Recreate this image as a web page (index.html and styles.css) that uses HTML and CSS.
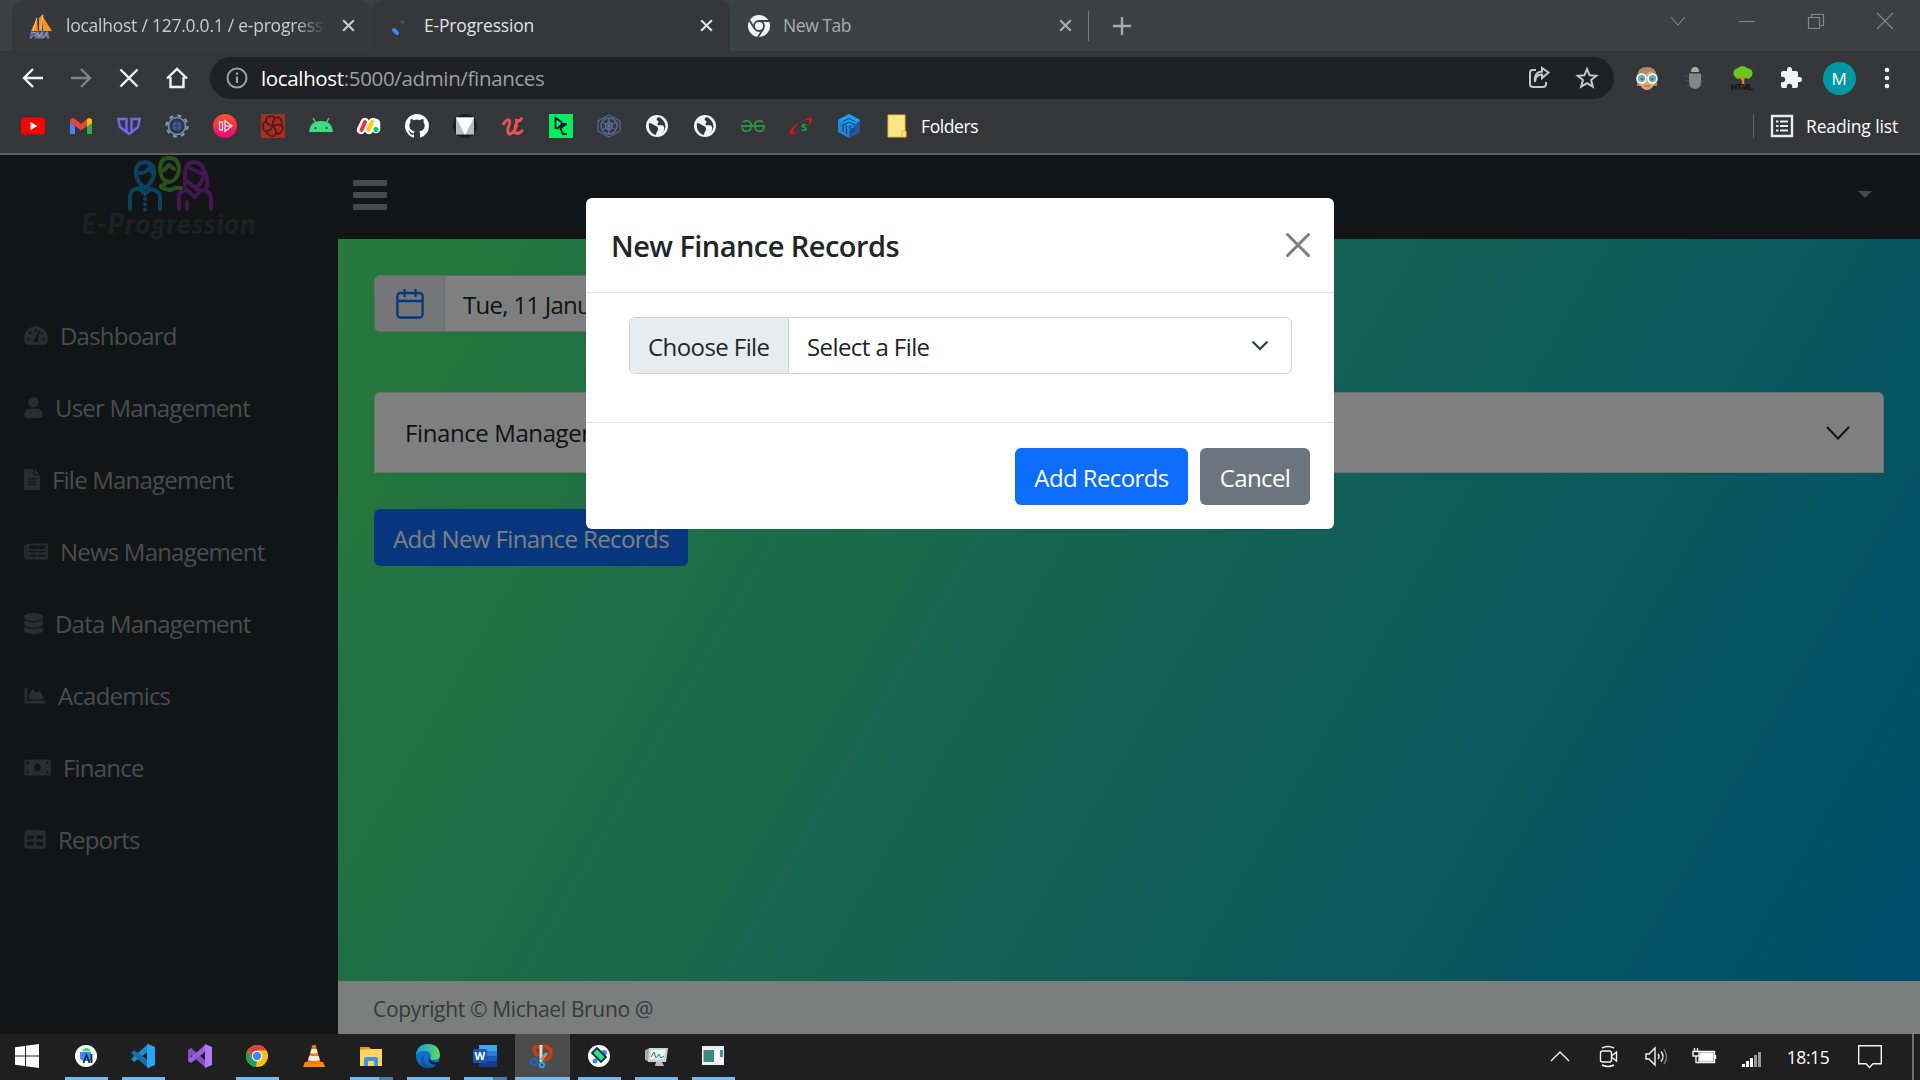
FILE: index.html
```html
<!DOCTYPE html>
<html lang="en">
<head>
<meta charset="utf-8">
<title>E-Progression</title>
<link rel="stylesheet" href="styles.css">
</head>
<body>
<svg width="0" height="0" class="defs" aria-hidden="true">
  <symbol id="x" viewBox="0 0 14 14"><path d="M2 2l10 10M12 2L2 12" stroke="currentColor" stroke-width="2" fill="none"/></symbol>
  <symbol id="globe" viewBox="0 0 24 24"><circle cx="12" cy="12" r="11" fill="#f1f3f4"/><path d="M4 9c4 0 5 3 7 3s2 3 2 4-2 2-2 5C6 20 3 15 4 9zM14 3c-3 1-3 3-1 4s-2 3 0 4 5-1 6 2-1 5-2 6c5-3 5-12-3-16z" fill="#35363a"/></symbol>
</svg>

<div class="tabs">
  <div class="tab first">
    <svg class="fav" viewBox="0 0 24 24"><path d="M1 17L7 4l1 13zM9 17V4l4-4-1 17zM13 17V3l9 14z" fill="#f69321"/><path d="M3 16L7 4M11 15l2-14" stroke="#fbc98b"/><text x="0" y="24" class="pma">PMA</text></svg>
    <span class="tab-title fade">localhost / 127.0.0.1 / e-progressi</span>
    <svg class="tx"><use href="#x"/></svg>
  </div>
  <div class="tab active">
    <svg class="fav" viewBox="0 0 24 24"><path d="M6 16l3 3" stroke="#4285f4" stroke-width="4" stroke-linecap="round"/><path d="M13 9l3-2" stroke="#375a58" stroke-width="3"/></svg>
    <span class="tab-title">E-Progression</span>
    <svg class="tx"><use href="#x"/></svg>
  </div>
  <div class="tab idle">
    <svg class="fav" viewBox="0 0 24 24"><circle cx="12" cy="12" r="11" fill="#f1f3f4"/><circle cx="12" cy="12" r="5" fill="none" stroke="#3c4043" stroke-width="1.8"/><path d="M12 7h11M7.500 14.500L2.200 6M16.500 14.500L11 23" stroke="#3c4043" stroke-width="1.800"/></svg>
    <span class="tab-title">New Tab</span>
    <svg class="tx"><use href="#x"/></svg>
  </div>
  <svg class="plus" viewBox="0 0 18 18"><path d="M9 0v18M0 9h18" stroke="#a9acaf" stroke-width="2.400"/></svg>
  <div class="wincontrols">
    <svg viewBox="0 0 18 18"><path d="M2 5l7 8 7-8"/></svg>
    <svg viewBox="0 0 18 18"><path d="M1 9.500h16"/></svg>
    <svg viewBox="0 0 18 18"><path d="M1.500 5.500h11v11h-11zM4.500 5V2.500h12v11H13"/></svg>
    <svg viewBox="0 0 18 18"><path d="M1 1l16 16M17 1L1 17"/></svg>
  </div>
</div>

<div class="toolbar">
  <span class="cell"><svg viewBox="0 0 24 24" class="ln"><path d="M22 12H3M12 3l-9 9 9 9"/></svg></span>
  <span class="cell"><svg viewBox="0 0 24 24" class="ln off"><path d="M2 12h19M12 3l9 9-9 9"/></svg></span>
  <span class="cell"><svg viewBox="0 0 24 24" class="ln"><path d="M3.500 3.500l17 17M20.500 3.500l-17 17"/></svg></span>
  <span class="cell"><svg viewBox="0 0 24 24" class="ln"><path d="M5.500 11v10h13V11M2 12.500L12 3l10 9.500"/></svg></span>
  <div class="omni">
    <svg class="info" viewBox="0 0 24 24"><circle cx="12" cy="12" r="9.500" fill="none" stroke="#9aa0a6" stroke-width="2"/><path d="M12 10.500v6.500M12 6.500v2.300" stroke="#9aa0a6" stroke-width="2.200"/></svg>
    <span class="url"><b>localhost</b>:5000/admin/finances</span>
    <span class="cell end"><svg viewBox="0 0 24 24" class="ln sm"><path d="M9 4H5.500Q3 4 3 7v11q0 3 3 3h10q3 0 3-3v-2M8 16c0-5 3-7.500 7-7.500V12l6.500-5.500L15 2v3.500C9 6 7 10 8 16z"/></svg></span>
    <span class="cell"><svg viewBox="0 0 24 24" class="ln sm"><path d="M12 3l2.600 6.300 6.700.5-5.200 4.300 1.700 6.600L12 17.100l-5.800 3.600 1.700-6.600-5.200-4.300 6.700-.5z"/></svg></span>
  </div>
  <span class="cell ext"><svg viewBox="0 0 24 24"><path d="M2 10Q3 1 12 1t10 9v10H2z" fill="#a98d67"/><path d="M4 9l7-1 5-3 4 4v8q-3 7-8 7t-8-7z" fill="#e5a27c"/><circle cx="6.500" cy="12.500" r="4.500" fill="#6fb2bd" stroke="#fff" stroke-width="1.600"/><circle cx="17.500" cy="12.500" r="4.500" fill="#6fb2bd" stroke="#fff" stroke-width="1.600"/><circle cx="7" cy="13" r="1.500" fill="#3b7686"/><circle cx="17" cy="13" r="1.500" fill="#3b7686"/><path d="M9 20h6" stroke="#b0523c"/></svg></span>
  <span class="cell"><svg viewBox="0 0 24 24"><path d="M2 9l5 3M22 9l-5 3M2 15h4m12 0h4M3 21l4-3m14 3l-4-3" stroke="#4d4e50"/><path d="M8 6q0-5 4-5t4 5z" fill="#aaa"/><path d="M6 7.500h12V15q0 8-6 8t-6-8z" fill="#858585"/></svg></span>
  <span class="cell"><svg viewBox="0 0 24 24"><path d="M12 8v13M12 13l4-4M12 14l-4-4" stroke="#d9822b" stroke-width="2.400"/><path d="M2.500 7q0-4 4.500-5 4-4 9 0 5.500 1 5.500 5t-4.500 6l-5-3-5 3q-4.500-2-4.500-6z" fill="#6cc71c"/><text x="0" y="24" class="htmlmark">HTML</text></svg></span>
  <span class="cell"><svg viewBox="0 0 24 24"><path d="M20.500 11H19V7a2 2 0 0 0-2-2h-4V3.500a2.500 2.500 0 0 0-5 0V5H4a2 2 0 0 0-2 2v3.800h1.500a2.700 2.700 0 0 1 0 5.400H2V20a2 2 0 0 0 2 2h3.800v-1.500a2.700 2.700 0 0 1 5.400 0V22H17a2 2 0 0 0 2-2v-4h1.500a2.500 2.500 0 0 0 0-5z" fill="#f1f3f4"/></svg></span>
  <span class="cell"><span class="avatar">M</span></span>
  <span class="cell"><svg viewBox="0 0 24 24" fill="#f1f3f4"><circle cx="12" cy="4" r="2.300"/><circle cx="12" cy="12" r="2.300"/><circle cx="12" cy="20" r="2.300"/></svg></span>
</div>

<div class="bookmarks">
  <span class="cell"><svg viewBox="0 0 24 24"><rect y="3.500" width="24" height="17" rx="3.500" fill="#f00"/><path d="M9.500 8l7 4-7 4z" fill="#fff"/></svg></span>
  <span class="cell"><svg viewBox="0 0 24 24"><path d="M1 6v14h5V10z" fill="#4285f4"/><path d="M23 6v14h-5V10z" fill="#34a853"/><path d="M1 5l5 1v6l-5-4z" fill="#c5221f"/><path d="M23 5l-5 1v6l5-4z" fill="#fbbc04"/><path d="M1.500 6Q3 2.500 6 5l6 5 6-5v7l-6 4.500L1.500 8z" fill="#ea4335"/><path d="M18 5q3-2.500 5 1v3l-5 3.500z" fill="#fbbc04"/></svg></span>
  <span class="cell"><svg viewBox="0 0 24 24" fill="none" stroke="#7864ee" stroke-width="2.400"><path d="M10.500 19L3 13 1.300 5h8.200v13M13.500 19l7.500-6 1.700-8h-8.200v13M9.500 18l2.500 2 2.500-2"/></svg></span>
  <span class="cell"><svg viewBox="0 0 24 24" fill="none" stroke="#6c8fbe"><circle cx="12" cy="12" r="8.500" stroke-width="1.600"/><circle cx="12" cy="12" r="10.500" stroke-width="2.200" stroke="#8099b9" stroke-dasharray="4 4.250"/><circle cx="12" cy="12" r="4.500" fill="#315fa5" stroke="none"/><path d="M8 12h8m-4-4v8" stroke="#263f67"/></svg></span>
  <span class="cell"><svg viewBox="0 0 24 24"><defs><linearGradient id="pg" x2="0" y2="1"><stop stop-color="#f15a22"/><stop offset="1" stop-color="#f5007e"/></linearGradient></defs><circle cx="12" cy="12" r="12" fill="url(#pg)"/><path d="M6.500 8v8h3V8zM12 6.500v11l7-5.500zM12 12h6" stroke="#ffdce8" stroke-width="1.300" fill="none"/></svg></span>
  <span class="cell"><svg viewBox="0 0 24 24"><path fill="#a52d25" d="M0 0h24v24H0z"/><g fill="none" stroke="#4a1a18" stroke-width="1.600"><path id="sw" d="M12 12q-1-8 5-9 6 4 3 9"/><use href="#sw" transform="rotate(72 12 12)"/><use href="#sw" transform="rotate(144 12 12)"/><use href="#sw" transform="rotate(216 12 12)"/><use href="#sw" transform="rotate(288 12 12)"/></g></svg></span>
  <span class="cell"><svg viewBox="0 0 24 24"><path d="M0 18Q1 7 12 7t12 11z" fill="#3ddc84"/><path d="M4 4l3 5M20 4l-3 5" stroke="#3ddc84" stroke-width="1.400"/><circle cx="6.500" cy="14" r="1.100" fill="#35363a"/><circle cx="17.500" cy="14" r="1.100" fill="#35363a"/></svg></span>
  <span class="cell"><svg viewBox="0 0 24 24"><path d="M4 16L8 8m4 8l4-8m3 7V9" stroke="#fff" stroke-width="8.500" stroke-linecap="round"/><path d="M4.500 16L8 8" stroke="#f62b54" stroke-width="4" stroke-linecap="round"/><path d="M11.500 16L15 8" stroke="#fc0" stroke-width="4" stroke-linecap="round"/><circle cx="19" cy="15.500" r="2.600" fill="#00ca72"/></svg></span>
  <span class="cell"><svg viewBox="0 0 16 16"><path fill="#fff" d="M8 0C3.580 0 0 3.580 0 8c0 3.540 2.290 6.530 5.470 7.590.4.070.55-.17.55-.38 0-.19-.01-.82-.01-1.490-2.010.37-2.530-.49-2.690-.94-.09-.23-.48-.94-.82-1.130-.28-.15-.68-.52-.01-.53.63-.01 1.080.58 1.230.82.720 1.210 1.870.87 2.330.66.070-.52.280-.87.510-1.070-1.780-.2-3.640-.89-3.640-3.950 0-.87.310-1.590.82-2.150-.08-.2-.36-1.020.08-2.120 0 0 .67-.21 2.200.82.640-.18 1.320-.27 2-.27s1.360.09 2 .27c1.530-1.040 2.200-.82 2.200-.82.440 1.100.160 1.920.080 2.120.510.560.82 1.270.82 2.150 0 3.070-1.870 3.750-3.650 3.950.290.250.540.730.540 1.480 0 1.070-.01 1.930-.01 2.200 0 .210.150.460.550.380A8 8 0 0 0 16 8c0-4.420-3.580-8-8-8z"/></svg></span>
  <span class="cell"><svg viewBox="0 0 24 24"><circle cx="12" cy="12" r="12" fill="#1d1d1f"/><path d="M3 3.500h18v17H3z" fill="#bbb"/><path d="M3 3.500h18L12 21z" fill="#fff"/></svg></span>
  <span class="cell"><svg viewBox="0 0 24 24" fill="none" stroke="#eb5252" stroke-width="3"><path d="M2 11q4-6 6-5t-1 8q-1 6 2 6 4-1 7-9M17 6q-4 8-3 12 2 4 8-2M14 6.500h5l2-3"/></svg></span>
  <span class="cell"><svg viewBox="0 0 24 24"><path fill="#03ef62" d="M0 0h24v24H0z"/><path d="M6.500 15V4l6 4v3l-5 4M18 10h-4l-2.500 5 2.500 5h4M11 15l6-5" fill="none" stroke="#05192d" stroke-width="1.800"/></svg></span>
  <span class="cell"><svg viewBox="0 0 24 24" fill="none" stroke="#5b6b96" stroke-width="1.400"><path d="M12 1l11 6v10l-11 6-11-6V7z" stroke="#48649f"/><circle cx="12" cy="12" r="8"/><circle cx="12" cy="12" r="3.500"/><path d="M12 4v16M5 8l14 8M5 16l14-8"/></svg></span>
  <span class="cell"><svg viewBox="0 0 24 24"><use href="#globe"/></svg></span>
  <span class="cell"><svg viewBox="0 0 24 24"><use href="#globe"/></svg></span>
  <span class="cell"><svg viewBox="0 0 24 24" fill="none" stroke="#2f8d46" stroke-width="2"><path d="M2 8q4-2.500 7 0 2.500 4 0 8-4 2.500-7 0-1-2-1-4h22q0 2-1 4-3 2.500-7 0-2.500-4 0-8 3-2.500 7 0"/></svg></span>
  <span class="cell"><svg viewBox="0 0 24 24"><path d="M13 7q10-6 10-2 0 3-4 7 2-5 1-6-4-1-11 4-5 5-5 8 1 2 8-1Q1 23 0 19 1 13 13 7z" fill="#d8141c"/><text x="12" y="17" class="slogo">s</text></svg></span>
  <span class="cell"><svg viewBox="0 0 24 24"><path d="M12 0l11 6v12l-11 6-11-6V6z" fill="#1e88d8"/><path d="M12 0l11 6-11 6L1 6z" fill="#12a5f4"/><path d="M12 18l11-12v12l-11 6z" fill="#28529b"/><path d="M6 7.500l6-3 6 3M6 11l6-3 6 3M6 11v7M9.500 11.500V20M13 11v4h5M13 18l4-2" fill="none" stroke="#163d72" stroke-width="1.100"/></svg></span>
  <span class="cell"><svg viewBox="0 0 24 24"><path d="M3 1h17v16h1v6H3z" fill="#ffe48a" stroke="#e9bd35"/><path d="M17 22v-5h4" fill="none" stroke="#e9bd35"/></svg></span>
  <span class="bm-label">Folders</span>
  <span class="reading"><svg viewBox="0 0 24 24"><path d="M2 2h20v20H2z" fill="none" stroke="#e8eaed" stroke-width="2.400"/><path d="M6 7.500h2.500m1.500 0h8M6 12h2.500m1.500 0h8M6 16.500h2.500m1.500 0h8" stroke="#e8eaed" stroke-width="2"/></svg><span>Reading list</span></span>
</div>

<div class="page">
  <aside class="sidebar">
    <div class="logo">
      <svg viewBox="126 155 88 57" fill="none" stroke-width="4" stroke-linecap="round">
        <g stroke="#1685bb"><path d="M145 162q-10 1-9 12 1 8 9 14 8-6 9-14 1-11-9-12zM140 173q6 0 9-5l4 5M130 209v-13q0-6 9-8l6 6 5-5M151 189q9 2 9 8v12"/><path d="M145 199v11" stroke-dasharray="0 5.200"/></g>
        <g stroke="#52a336"><path d="M169 158q-9 0-9 11 1 8 4 11l5 2 5-2q4-3 5-11 0-11-10-11zM164 170l5-5 5 4M161 186q4-1 5-4M161 187q8 5 14 1l6 0M169 190h2"/></g>
        <g stroke="#842da3"><path d="M194 162q-9 0-9 13v11M194 162q10 1 10 11-1 10-9 15l-8-7M203 168q7 13 3 21M190 168l12 6M179 209v-12q0-6 8-7l8 7 6-7q10 1 10 8v11M187 202v7M195 188l5 3"/></g>
      </svg>
      <span class="brand">E-Progression</span>
    </div>
    <nav>
      <a><svg width="24" viewBox="0 0 576 512"><path fill-rule="evenodd" d="M288 32C129 32 0 161 0 320c0 53 14 102 39 145 6 9 16 15 27 15h444c11 0 21-6 27-15 25-43 39-92 39-145C576 161 447 32 288 32zM96 320a32 32 0 1 0 .1 64 32 32 0 0 0 0-64zM144 160a32 32 0 1 0 .1 64 32 32 0 0 0 0-64zM288 96a32 32 0 1 0 .1 64 32 32 0 0 0 0-64zM432 176a32 32 0 1 0 .1 64 32 32 0 0 0 0-64zM480 320a32 32 0 1 0 .1 64 32 32 0 0 0 0-64zM350 150l36 10-55 175q29 29 13 81H232q-20-60 48-92z"/></svg>Dashboard</a>
      <a><svg width="19" viewBox="0 0 448 512"><path d="M224 256a128 128 0 1 0 0-256 128 128 0 0 0 0 256zm90 32H134C60 288 0 348 0 422v42c0 26 22 48 48 48h352c26 0 48-22 48-48v-42c0-74-60-134-134-134z"/></svg>User Management</a>
      <a><svg width="16" viewBox="0 0 384 512"><path fill-rule="evenodd" d="M224 136V0H24Q0 0 0 24v464q0 24 24 24h336q24 0 24-24V160H248q-24 0-24-24zM96 224h192v32H96zm0 64h192v32H96zm0 64h192v32H96zM256 0v128h128z"/></svg>File Management</a>
      <a><svg width="24" viewBox="0 0 576 512"><path fill-rule="evenodd" d="M552 64H88Q64 64 64 88v8H24Q0 96 0 120v272q0 56 56 56h496q24 0 24-24V88q0-24-24-24zM48 144h16v256H48zM120 112h400v80H120zm0 128h184v40H120zm216 0h184v40H336zM120 336h184v40H120zm216 0h184v40H336z"/></svg>News Management</a>
      <a><svg width="19" viewBox="0 0 448 512"><path d="M448 73v46c0 40-100 73-224 73S0 159 0 119V73C0 33 100 0 224 0s224 33 224 73zm0 103v103c0 40-100 73-224 73S0 319 0 279V176c48 33 136 48 224 48s176-15 224-48zm0 160v103c0 40-100 73-224 73S0 479 0 439V336c48 33 136 48 224 48s176-15 224-48z"/></svg>Data Management</a>
      <a><svg width="22" viewBox="0 0 512 512"><path d="M500 384q12 0 12 12v52H12q-12 0-12-12V64h64v320zM96 352V248l94-144q10-10 20 0l72 82 80-40q12-6 18 6l100 200z"/></svg>Academics</a>
      <a><svg width="27" viewBox="0 0 640 512"><path fill-rule="evenodd" d="M608 64H32Q0 64 0 96v320q0 32 32 32h576q32 0 32-32V96q0-32-32-32zM48 400v-64q64 0 64 64zm0-224v-64h64q0 64-64 64zm272 176c-44 0-80-43-80-96s36-96 80-96 80 43 80 96-36 96-80 96zm272 48h-64q0-64 64-64zm0-224q-64 0-64-64h64z"/></svg>Finance</a>
      <a><svg width="22" viewBox="0 0 512 512"><path fill-rule="evenodd" d="M464 32H48Q0 32 0 80v352q0 48 48 48h416q48 0 48-48V80q0-48-48-48zM64 160h160v88H64zm0 152h160v96H64zm224-152h160v88H288zm0 152h160v96H288z"/></svg>Reports</a>
    </nav>
  </aside>
  <main class="main">
    <header class="navbar">
      <div class="burger"><i></i><i></i><i></i></div>
      <div class="caret"></div>
    </header>
    <section class="content">
      <div class="date">
        <span class="cal"><svg viewBox="0 0 28 30" fill="none" stroke="#0d6efd" stroke-width="2.300"><rect x="1.400" y="4" width="25.200" height="24.500" rx="3"/><path d="M1 12h26M8.500 0v8M19.500 0v8"/></svg></span>
        <span class="date-text">Tue, 11 January 2022</span>
      </div>
      <div class="accordion"><span>Finance Management</span><svg viewBox="0 0 24 14" fill="none" stroke="#212529" stroke-width="2"><path d="M1 1l11 11.500L23 1"/></svg></div>
      <button class="btn primary">Add New Finance Records</button>
    </section>
    <footer class="foot">Copyright © Michael Bruno @</footer>
  </main>
  <div class="backdrop"></div>
  <div class="modal">
    <div class="modal-head"><h5>New Finance Records</h5><svg viewBox="0 0 24 24"><path d="M1.500 1.500l21 21M22.500 1.500l-21 21" stroke="#7f7f7f" stroke-width="3" stroke-linecap="round"/></svg></div>
    <div class="modal-body"><div class="group"><span class="lbl">Choose File</span><span class="sel">Select a File<svg viewBox="0 0 16 10"><path d="M1.200 1.200L8 8l6.800-6.800" fill="none" stroke="#343a40" stroke-width="2.200" stroke-linecap="round"/></svg></span></div></div>
    <div class="modal-foot"><button class="btn primary add">Add Records</button><button class="btn secondary">Cancel</button></div>
  </div>
</div>

<div class="taskbar">
  <span class="task start"><svg viewBox="0 0 24 24" fill="#fff"><path d="M0 3.300L10 2v9.500H0zM11 1.800L24 0v11.500H11zM0 12.500h10V22L0 20.700zM11 12.500h13V24l-13-1.800z"/></svg></span>
  <span class="task on"><svg viewBox="0 0 24 24"><circle cx="12" cy="12" r="11" fill="#fff"/><path d="M8 7.500q1-3.500 4.500-3.500T17 7.500z" fill="#3ddc84"/><path d="M6 8h11v9H9l-3-2z" fill="#4285f4"/><path d="M9.500 19l3-8 3 8M17.500 10v9" fill="none" stroke="#073042" stroke-width="1.800"/></svg></span>
  <span class="task on"><svg viewBox="0 0 24 24"><path d="M17 0L0 15l3 3L18 7z" fill="#2489ca"/><path d="M17 24L0 9l3-3 15 11z" fill="#1070b3"/><path d="M17 0l7 3v18l-7 3-1-1V1z" fill="#27a5f1"/></svg></span>
  <span class="task"><svg viewBox="0 0 24 24"><path d="M0 6l3-2 15 13v7L3 11v7l-3-2z" fill="#854cc7"/><path d="M0 17l3 2L18 7V0L0 16z" fill="#9d5cdd"/><path d="M17 0l7 3v18l-7 3z" fill="#b179f1"/></svg></span>
  <span class="task on"><svg viewBox="0 0 24 24"><circle cx="12" cy="12" r="11" fill="#fbc116"/><path d="M2.500 6.500L7.200 15 12 12V6.500h9.500A11 11 0 0 0 2.500 6.500z" fill="#db4437"/><path d="M2.500 6.500L7 15l5 2.500L11 23A11 11 0 0 1 2.500 6.500z" fill="#1da05a"/><circle cx="12" cy="12" r="5.300" fill="#fff"/><circle cx="12" cy="12" r="4.200" fill="#4285f4"/></svg></span>
  <span class="task"><svg viewBox="0 0 24 24"><path d="M3 18h18l2 5H1z" fill="#fa8b0c"/><path d="M10.500 1h3L19 19q-7 3-14 0z" fill="#f07c00"/><path d="M9.500 5h5l1.200 4q-3.700 1.500-7.400 0zM7.500 12h9l1.300 4q-6 2-11.600 0z" fill="#eee"/></svg></span>
  <span class="task on multi"><svg viewBox="0 0 24 24"><path d="M1 3h9l2 2v4H1z" fill="#e0a008"/><path d="M1 6l11-1h11v17H1z" fill="#ffd45e"/><path d="M5 22v-7q0-2 2-2h10q2 0 2 2v7h-4v-5H9v5z" fill="#3a96dd"/></svg></span>
  <span class="task on"><svg viewBox="0 0 24 24"><defs><linearGradient id="eg"><stop stop-color="#1696df"/><stop offset="1" stop-color="#65dd55"/></linearGradient></defs><circle cx="12" cy="12" r="12" fill="#0c72c9"/><path d="M0 11Q1 0 12 0t12 11q0 5-7 5-4-1-2-4-1-5-6-5-6 0-9 4z" fill="url(#eg)"/><path d="M13 13q0 6 10 5l1-4v6l-4 1q-9 0-7-8z" fill="#202020"/><path d="M8 11q-2 13 12 9-8 7-14 2-4-5 2-11z" fill="#1553a5"/></svg></span>
  <span class="task on multi"><svg viewBox="0 0 24 24"><path d="M6 1h18v6H6z" fill="#41a5ee"/><path d="M6 7h18v5H6z" fill="#2b7cd3"/><path d="M6 12h18v5H6z" fill="#185abd"/><path d="M6 17h18v6H6z" fill="#103f91"/><rect y="5" width="14" height="14" rx="1" fill="#1956b5"/><text x="1.500" y="16" class="wmark">W</text></svg></span>
  <span class="task on current"><svg viewBox="0 0 24 24"><path d="M3 3h8M4 4q1 6 4 8" fill="none" stroke="#cf3c0c" stroke-width="3.500"/><path d="M10 2.500q10-1 11 6 0 7-8 8" fill="none" stroke="#cf3c0c" stroke-width="3.500"/><path d="M11 1v17" stroke="#ddd" stroke-width="3"/><path d="M17 9l-6 7" stroke="#999" stroke-width="3"/><circle cx="4" cy="18" r="3" fill="none" stroke="#0c6cc0" stroke-width="2.200"/><circle cx="12" cy="21" r="2.300" fill="none" stroke="#29a0e8" stroke-width="2"/></svg></span>
  <span class="task on"><svg viewBox="0 0 24 24"><circle cx="12" cy="12" r="11" fill="#fff"/><circle cx="8" cy="17" r="2.500" fill="#4285f4"/><circle cx="17" cy="9" r="3" fill="#4285f4"/><path d="M10 4l9 9-5 5-9-9z" fill="#3ddc84" stroke="#073042" stroke-width="1.800"/></svg></span>
  <span class="task on"><svg viewBox="0 0 24 24"><path d="M1 6l5-2v14l-5-2z" fill="#aaa"/><path d="M5 4h19l-2 14H4z" fill="#d2d2d2"/><path d="M7 6h14l-1 9H6z" fill="#eef6fb"/><path d="M7 13l3-5 2 6 3-4 2 4 3-2" fill="none" stroke="#1978aa"/><path d="M12 18h6l2 4h-9z" fill="#bbb"/></svg></span>
  <span class="task on"><svg viewBox="0 0 24 24"><path d="M1 2h22v19H1z" fill="#eceff4"/><path d="M2.500 6H13v12H2.500z" fill="#3b8b78"/><path d="M14 6h4v12h-4zM19 14h3v4h-3z" fill="#fff"/><path d="M19 6h3v7h-3z" fill="#4b8e8b"/></svg></span>
  <div class="tray">
    <span class="cell"><svg viewBox="0 0 24 24"><path d="M3 16l9-9 9 9"/></svg></span>
    <span class="cell"><svg viewBox="0 0 24 24"><rect x="4.500" y="6" width="11" height="11" rx="2"/><path d="M15.500 11l5-4v9l-5-4M6 3q6-3 12 0M6 20q6 3 12 0"/></svg></span>
    <span class="cell"><svg viewBox="0 0 24 24"><path d="M2 9h3l6-6v17l-6-6H2zM14 9q2 2.500 0 5M17 6.500q4 5 0 10"/><path d="M20 4q5 8 0 15" stroke="#777"/></svg></span>
    <span class="cell"><svg viewBox="0 0 24 24"><path d="M7 6.500h15.500v11H6M23.500 10v4"/><path d="M9 8h12v8H7v-3z" fill="#fff"/><path d="M1 6.500h6V11H1zM2.500 3v3M5.500 3v3M4 11v6.500h3"/></svg></span>
    <span class="cell"><svg viewBox="0 0 24 24" class="sig"><path d="M2 19h3v3H2zM6 16h3v6H6zM10 13h3v9h-3z" fill="#fff"/><path d="M14 10h3v12h-3zM18 7h3v15h-3z" fill="#999"/></svg></span>
    <span class="clock">18:15</span>
    <span class="note"><svg viewBox="0 0 24 24"><path d="M.7.700h22.600v18H15L11.500 22.500 8 18.700H.7z"/></svg></span>
    <span class="peek"></span>
  </div>
</div>
</body>
</html>
```
FILE: styles.css
```css
* { box-sizing: border-box; }
body { margin: 0; width: 1920px; height: 1080px; overflow: hidden; display: flex; flex-direction: column; font-family: "Open Sans", "Noto Sans", sans-serif; background: #35363a; letter-spacing: -0.025em; white-space: nowrap; }
svg { display: block; flex: none; overflow: visible; }
.defs { position: absolute; }
.cell { width: 48px; height: 100%; display: flex; align-items: center; justify-content: center; flex: none; }
.cell svg { width: 24px; height: 24px; }

.tabs { height: 51px; background: #3c4043; display: flex; align-items: center; padding-left: 12px; flex: none; }
.tab { height: 51px; width: 359px; display: flex; align-items: center; padding-left: 18px; color: #dfe1e5; font-size: 17.5px; flex: none; }
.tab.first { background: #37383c; border-radius: 12px 12px 0 0; color: #c9cbce; }
.tab.active { background: #35363a; border-radius: 12px 12px 0 0; padding-left: 17px; }
.fav { width: 24px; height: 24px; }
.pma { font: bold italic 9px "Liberation Sans", sans-serif; fill: #2f2f6e; stroke: #d5d5ee; stroke-width: .4px; }
.tab-title { margin: 0 0 2px 12px; width: 260px; overflow: hidden; }
.first .tab-title { letter-spacing: -0.014em; }
.active .tab-title { width: 271px; letter-spacing: -0.01em; }
.active .tx { margin-left: 4px; }
.fade { -webkit-mask-image: linear-gradient(90deg, #000 88%, transparent); mask-image: linear-gradient(90deg, #000 88%, transparent); }
.tx { width: 15px; height: 15px; margin-left: 15px; }
.tab.idle { height: 30px; padding-left: 17px; color: #a9acaf; border-right: 1px solid #787b7f; }
.idle .tab-title { letter-spacing: -0.025em; }
.idle .tx { margin-left: 15px; }
.plus { width: 18px; height: 18px; margin-left: 24px; }
.wincontrols { margin-left: auto; display: flex; gap: 51px; padding: 0 26px 9px 0; }
.wincontrols svg { width: 18px; height: 18px; fill: none; stroke: #84878a; stroke-width: 1.1px; }

.toolbar { height: 54px; display: flex; align-items: center; padding-left: 9px; flex: none; }
.ln { fill: none; stroke: #f1f3f4; stroke-width: 2.4px; }
.ln.off { stroke: #7f8286; }
.ln.sm { stroke: #c4c7ca; stroke-width: 2px; }
.omni { margin-left: 9px; width: 1404px; height: 42px; border-radius: 21px; background: #202124; display: flex; align-items: center; padding: 0 3px 0 15px; }
.info { width: 24px; height: 24px; }
.url { margin-left: 12px; font-size: 20.5px; color: #9aa0a6; letter-spacing: -0.017em; }
.url b { font-weight: 400; color: #fff; }
.end { margin-left: auto; }
.ext { margin-left: 9px; }
.htmlmark { font: bold 8.5px "Liberation Sans", sans-serif; fill: #111; }
.avatar { width: 33px; height: 33px; border-radius: 50%; background: #0097a7; color: #fff; font-size: 17px; display: flex; align-items: center; justify-content: center; }

.bookmarks { height: 50px; display: flex; align-items: center; padding: 0 22px 6px 9px; border-bottom: 2px solid #5f6064; color: #fff; font-size: 17.5px; flex: none; }
.bm-label { margin-bottom: 1px; }
.slogo { font: bold 13px "Open Sans", sans-serif; fill: #14a24a; }
.reading { margin-left: auto; display: flex; align-items: center; border-left: 1px solid #66686c; height: 24px; padding-left: 16px; gap: 12px; letter-spacing: -0.008em; }
.reading svg { width: 24px; height: 24px; }

.page { height: 879px; display: flex; position: relative; flex: none; font-size: 24px; overflow: hidden; }
.sidebar { width: 338px; background: #24282c; flex: none; }
.logo { height: 144px; display: flex; flex-direction: column; align-items: center; }
.logo svg { width: 88px; height: 57px; margin-left: 2px; }
.brand { font: italic 900 28px/28px Lato, sans-serif; color: #3d3f4b; letter-spacing: 0.95px; margin-top: -3px; }
nav { display: flex; flex-direction: column; }
nav a { height: 72px; display: flex; align-items: center; gap: 12px; padding-left: 24px; color: #97989a; letter-spacing: -0.033em; }
nav svg { height: 21px; fill: #58595c; }
.main { flex: 1; display: flex; flex-direction: column; }
.navbar { height: 84px; background: #24282c; display: flex; align-items: center; justify-content: space-between; padding: 0 48px 6px 15px; }
.burger { display: flex; flex-direction: column; gap: 6px; padding-top: 1px; }
.burger i { width: 34px; height: 6px; background: #929395; border-radius: 1px; }
.caret { border: 7px solid transparent; border-top-color: #929395; border-bottom: 0; }
.content { height: 742px; padding: 36px; background: linear-gradient(120deg, #50f274, #0098d6); display: flex; flex-direction: column; align-items: flex-start; }
.date { height: 57px; width: 600px; display: flex; border: 1px solid #ced4da; border-radius: 6px; background: #fff; color: #212529; }
.cal { width: 70px; background: #e9ecef; border-right: 1px solid #ced4da; display: flex; align-items: center; justify-content: center; border-radius: 5px 0 0 5px; }
.cal svg { width: 28px; height: 30px; }
.date-text { padding: 11px 18px; line-height: 36px; letter-spacing: -0.03em; }
.accordion { margin-top: 60px; height: 81px; width: 1510px; border: 1px solid #dfdfdf; border-radius: 6px 6px 0 0; background: #fff; display: flex; align-items: center; justify-content: space-between; padding: 0 33px 0 30px; color: #212529; }
.accordion svg { width: 24px; height: 14px; }
.content .btn { margin-top: 36px; width: 314px; }
.btn { height: 57px; border: 0; border-radius: 6px; color: #fff; font: 24px/36px "Open Sans", sans-serif; letter-spacing: -0.025em; padding: 2px 0 0; }
.primary { background: #0d6efd; }
.secondary { background: #6c757d; width: 110px; }
.add { width: 173px; }
.foot { height: 53px; background: #f9fdfb; color: #6c7378; font-size: 21px; line-height: 57px; padding-left: 35px; letter-spacing: -0.016em; }
.backdrop { position: absolute; inset: 0; background: rgba(0,0,0,.5); }
.modal { position: absolute; left: 586px; top: 43px; width: 748px; height: 331px; background: #fff; border-radius: 6px; color: #212529; display: flex; flex-direction: column; }
.modal-head { height: 95px; border-bottom: 1px solid #dee2e6; display: flex; align-items: center; justify-content: space-between; padding: 0 24px 0 25px; }
.modal-head h5 { margin: 0; font-size: 29px; font-weight: 600; letter-spacing: -0.019em; }
.modal-head svg { width: 24px; height: 24px; }
.modal-body { height: 130px; padding: 24px 42px 0 43px; border-bottom: 1px solid #dee2e6; }
.group { height: 57px; display: flex; border: 1px solid #ced4da; border-radius: 6px; overflow: hidden; line-height: 57px; letter-spacing: -0.024em; }
.lbl { width: 159px; background: #e9ecef; border-right: 1px solid #ced4da; padding-left: 18px; }
.sel { flex: 1; display: flex; align-items: center; justify-content: space-between; padding: 1px 23px 0 18px; }
.sel svg { width: 16px; height: 10px; }
.modal-foot { display: flex; justify-content: flex-end; gap: 12px; padding: 25px 24px 0; }

.taskbar { height: 46px; background: #1f1f1f; display: flex; flex: none; }
.task { width: 57px; height: 46px; display: flex; align-items: center; justify-content: center; flex: none; }
.task svg { width: 24px; height: 24px; margin: -2px 1px 0 0; }
.start { width: 55px; margin-right: 3px; }
.on { background: linear-gradient(#76b9ed, #76b9ed) center bottom / 43px 3px no-repeat; }
.multi { background: linear-gradient(90deg, #76b9ed 29px, #4b7dab 29px) center bottom / 43px 3px no-repeat; }
.current { background: linear-gradient(#76b9ed, #76b9ed) center bottom / 55px 3px no-repeat, linear-gradient(#4c4c4c, #4c4c4c) center / 55px 46px no-repeat; }
.wmark { font: bold 11px "Open Sans", sans-serif; fill: #fff; }
.tray { margin-left: auto; display: flex; align-items: center; }
.tray svg { fill: none; stroke: #f4f4f4; stroke-width: 1.4px; }
.tray svg.sig { stroke: none; }
.clock { width: 64px; text-align: center; color: #fff; font-size: 17.5px; }
.note { width: 60px; display: flex; justify-content: center; }
.note svg { width: 24px; height: 24px; }
.peek { width: 2px; height: 46px; background: #6e6e6e; margin: 0 6px 0 12px; }
```
